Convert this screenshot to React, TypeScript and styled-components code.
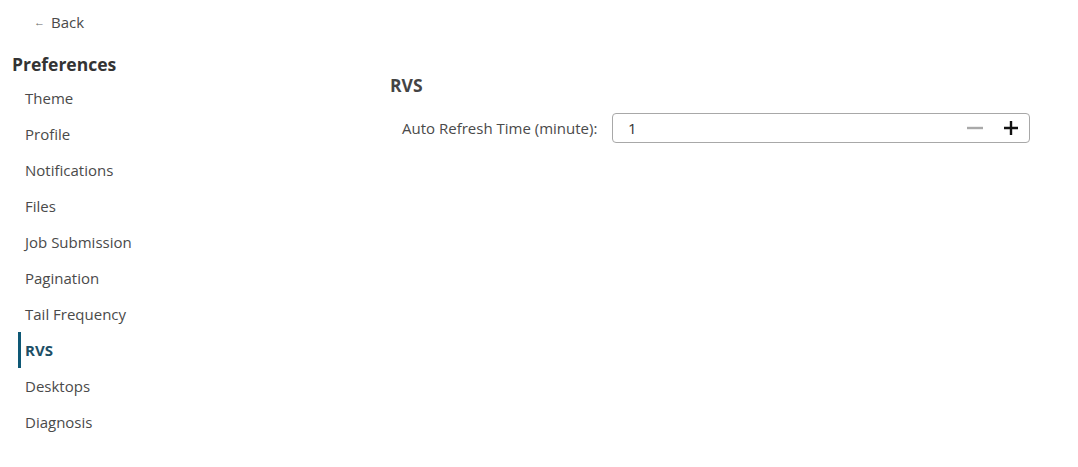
import React, { useState } from 'react';
import styled, { createGlobalStyle } from 'styled-components';

const GlobalStyle = createGlobalStyle`
  body {
    margin: 0;
    background: #ffffff;
    font-family: "Open Sans", "Noto Sans", Arial, sans-serif;
    color: #333333;
  }
`;

const menuItems = [
  'Theme',
  'Profile',
  'Notifications',
  'Files',
  'Job Submission',
  'Pagination',
  'Tail Frequency',
  'RVS',
  'Desktops',
  'Diagnosis',
];

const MinusIcon = () => (
  <svg width="18" height="16" viewBox="0 0 18 16">
    <path d="M1 8h16" stroke="#a9a9a9" strokeWidth="2.4" />
  </svg>
);

const PlusIcon = () => (
  <svg width="16" height="16" viewBox="0 0 16 16">
    <path d="M1 8h14M8 1v14" stroke="#111111" strokeWidth="2.4" />
  </svg>
);

const App = (): React.JSX.Element => {
  const [active, setActive] = useState('RVS');
  const [minutes, setMinutes] = useState(1);

  return (
    <>
      <GlobalStyle />
      <Page>
        <BackLink href="#">
          <Arrow>←</Arrow>
          Back
        </BackLink>
        <Layout>
          <Sidebar>
            <SidebarHeading>Preferences</SidebarHeading>
            <Menu>
              {menuItems.map((item) => (
                <MenuItem key={item} $active={item === active} onClick={() => setActive(item)}>
                  {item}
                </MenuItem>
              ))}
            </Menu>
          </Sidebar>
          <Main>
            <SectionTitle>RVS</SectionTitle>
            <FieldRow>
              <FieldLabel>Auto Refresh Time (minute):</FieldLabel>
              <NumberBox>
                <NumberInput
                  value={minutes}
                  onChange={(e) => setMinutes(Number(e.target.value) || 0)}
                />
                <StepButton onClick={() => setMinutes((m) => Math.max(1, m - 1))}>
                  <MinusIcon />
                </StepButton>
                <StepButton onClick={() => setMinutes((m) => m + 1)}>
                  <PlusIcon />
                </StepButton>
              </NumberBox>
            </FieldRow>
          </Main>
        </Layout>
      </Page>
    </>
  );
};

export default App;

const Page = styled.div`
  padding: 12px 48px 0 12px;
`;

const BackLink = styled.a`
  display: flex;
  align-items: center;
  gap: 6px;
  margin-left: 22px;
  height: 20px;
  font-size: 15px;
  line-height: 20px;
  color: #4a4a4a;
  text-decoration: none;
`;

const Arrow = styled.span`
  font-size: 11px;
  color: #666666;
`;

const Layout = styled.div`
  display: grid;
  grid-template-columns: 378px 1fr;
  margin-top: 20px;
`;

const Sidebar = styled.nav`
  display: flex;
  flex-direction: column;
`;

const SidebarHeading = styled.h2`
  margin: 0 0 4px;
  font-size: 17.5px;
  line-height: 24px;
  font-weight: 700;
  color: #333333;
`;

const Menu = styled.div`
  display: flex;
  flex-direction: column;
`;

const MenuItem = styled.div<{ $active: boolean }>`
  height: 36px;
  display: flex;
  align-items: center;
  margin-left: 6px;
  padding-left: 4px;
  border-left: 3px solid ${(p) => (p.$active ? '#0e5875' : 'transparent')};
  font-size: 15px;
  font-weight: ${(p) => (p.$active ? 700 : 400)};
  color: ${(p) => (p.$active ? '#1d4f66' : '#4a4a4a')};
  cursor: pointer;
`;

const Main = styled.main`
  padding-top: 21px;
`;

const SectionTitle = styled.h3`
  margin: 0;
  font-size: 17.5px;
  line-height: 24px;
  font-weight: 700;
  color: #444444;
`;

const FieldRow = styled.div`
  display: flex;
  align-items: center;
  margin-top: 16px;
  padding-left: 12px;
`;

const FieldLabel = styled.label`
  width: 210px;
  font-size: 15px;
  color: #4a4a4a;
`;

const NumberBox = styled.div`
  display: flex;
  align-items: center;
  width: 418px;
  height: 30px;
  box-sizing: border-box;
  border: 1px solid #a8a8a8;
  border-radius: 4px;
  background: #ffffff;
`;

const NumberInput = styled.input`
  flex: 1;
  min-width: 0;
  height: 100%;
  border: none;
  outline: none;
  padding: 0 0 0 15px;
  background: transparent;
  font-family: inherit;
  font-size: 15px;
  color: #333333;
`;

const StepButton = styled.button`
  width: 36px;
  height: 100%;
  display: flex;
  align-items: center;
  justify-content: center;
  padding: 0;
  border: none;
  background: transparent;
  cursor: pointer;
`;
